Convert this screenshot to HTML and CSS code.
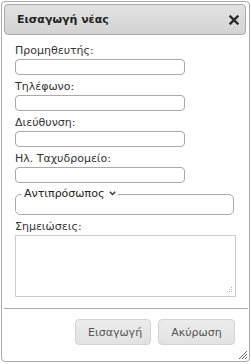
FILE: index.html
```
<!DOCTYPE html>
<html lang="el">
<head>
<meta charset="utf-8">
<title>Εισαγωγή νέας</title>
<link rel="stylesheet" href="styles.css">
</head>
<body>
<div class="dialog">
  <div class="titlebar">
    <span class="title">Εισαγωγή νέας</span>
    <span class="close" title="Κλείσιμο">
      <svg width="10" height="10" viewBox="0 0 10 10"><path d="M1.5 1.5 L8.5 8.5 M8.5 1.5 L1.5 8.5" stroke="#2a2a2a" stroke-width="2.4" stroke-linecap="square"/></svg>
    </span>
  </div>
  <div class="content">
    <label class="lbl">Προμηθευτής:</label>
    <input class="field" type="text">
    <label class="lbl">Τηλέφωνο:</label>
    <input class="field" type="text">
    <label class="lbl">Διεύθυνση:</label>
    <input class="field" type="text">
    <label class="lbl">Ηλ. Ταχυδρομείο:</label>
    <input class="field" type="text">
    <fieldset class="group">
      <legend class="legend">Αντιπρόσωπος <svg class="chev" width="7" height="5" viewBox="0 0 7 5"><path d="M0.8 0.8 L3.5 3.6 L6.2 0.8" fill="none" stroke="#333" stroke-width="1.4"/></svg></legend>
    </fieldset>
    <label class="lbl">Σημειώσεις:</label>
    <div class="notes-wrap">
      <textarea class="notes"></textarea>
      <svg class="notes-grip" width="7" height="7" viewBox="0 0 7 7" fill="#b5b5b5"><rect x="5" y="0" width="1" height="1"/><rect x="3" y="2" width="1" height="1"/><rect x="5" y="2" width="1" height="1"/><rect x="1" y="4" width="1" height="1"/><rect x="3" y="4" width="1" height="1"/><rect x="5" y="4" width="1" height="1"/></svg>
    </div>
  </div>
  <div class="buttonpane">
    <button class="btn" type="button">Εισαγωγή</button>
    <button class="btn" type="button">Ακύρωση</button>
  </div>
  <svg class="grip" width="12" height="12" viewBox="0 0 12 12"><path d="M11 3 L3 11 M11 6 L6 11 M11 9 L9 11" stroke="#666" stroke-width="1"/></svg>
</div>
</body>
</html>
```
FILE: styles.css
```
html, body {
  margin: 0;
  padding: 0;
  background: #fff;
}
body {
  font-family: "DejaVu Sans", Verdana, sans-serif;
  font-size: 11px;
  color: #222;
}
.dialog {
  position: relative;
  box-sizing: border-box;
  margin: 1px 0 0 1px;
  width: 249px;
  height: 361px;
  border: 1px solid #aaa;
  border-radius: 4px;
  padding: 2px;
  background: #fff;
  display: flex;
  flex-direction: column;
}
.titlebar {
  box-sizing: border-box;
  height: 31px;
  flex: none;
  margin-right: 1px;
  border: 1px solid #aaa;
  border-radius: 4px;
  background: linear-gradient(#e2e2e2, #d3d3d3);
  display: flex;
  align-items: center;
  justify-content: space-between;
  padding: 0 6px 0 12px;
}
.title {
  font-weight: bold;
  font-size: 11px;
  color: #222;
}
.close {
  display: flex;
  width: 10px;
  height: 10px;
}
.content {
  padding: 4px 11px 0 11px;
  display: flex;
  flex-direction: column;
  align-items: flex-start;
  flex: 1;
}
.lbl {
  display: block;
  line-height: 13px;
  margin-top: 5px;
  color: #333;
}
.field {
  box-sizing: border-box;
  width: 170px;
  height: 16px;
  margin: 2px 0 0 0;
  padding: 0 3px;
  border: 1px solid #a9a9a9;
  border-radius: 4px;
  font: inherit;
  background: #fff;
}
.group {
  box-sizing: border-box;
  width: 219px;
  height: 27px;
  margin: 5px 0 0 0;
  padding: 0 6px;
  border: 1px solid #aaa;
  border-radius: 5px;
}
.legend {
  padding: 0 2px;
  color: #222;
  line-height: 12px;
}
.chev {
  vertical-align: 1px;
  margin-left: 1px;
}
.notes-wrap {
  position: relative;
  margin-top: 2px;
  display: flex;
}
.notes {
  box-sizing: border-box;
  width: 221px;
  height: 62px;
  margin: 0;
  border: 1px solid #ccc;
  border-radius: 0;
  font: inherit;
  resize: none;
}
.notes-grip {
  position: absolute;
  right: 3px;
  bottom: 3px;
}
.buttonpane {
  flex: none;
  border-top: 1px solid #aaa;
  margin: 0 -1px 0 0;
  padding: 10px 13px 14px 0;
  display: flex;
  justify-content: flex-end;
  gap: 7px;
}
.btn {
  box-sizing: border-box;
  height: 26px;
  padding: 0 12px;
  border: 1px solid #d3d3d3;
  border-radius: 4px;
  background: linear-gradient(#ececec, #e2e2e2);
  color: #555;
  font: inherit;
  font-size: 11px;
}
.btn:first-child { width: 76px; }
.btn:last-child { width: 77px; }
.grip {
  position: absolute;
  right: 1px;
  bottom: 1px;
}
```
